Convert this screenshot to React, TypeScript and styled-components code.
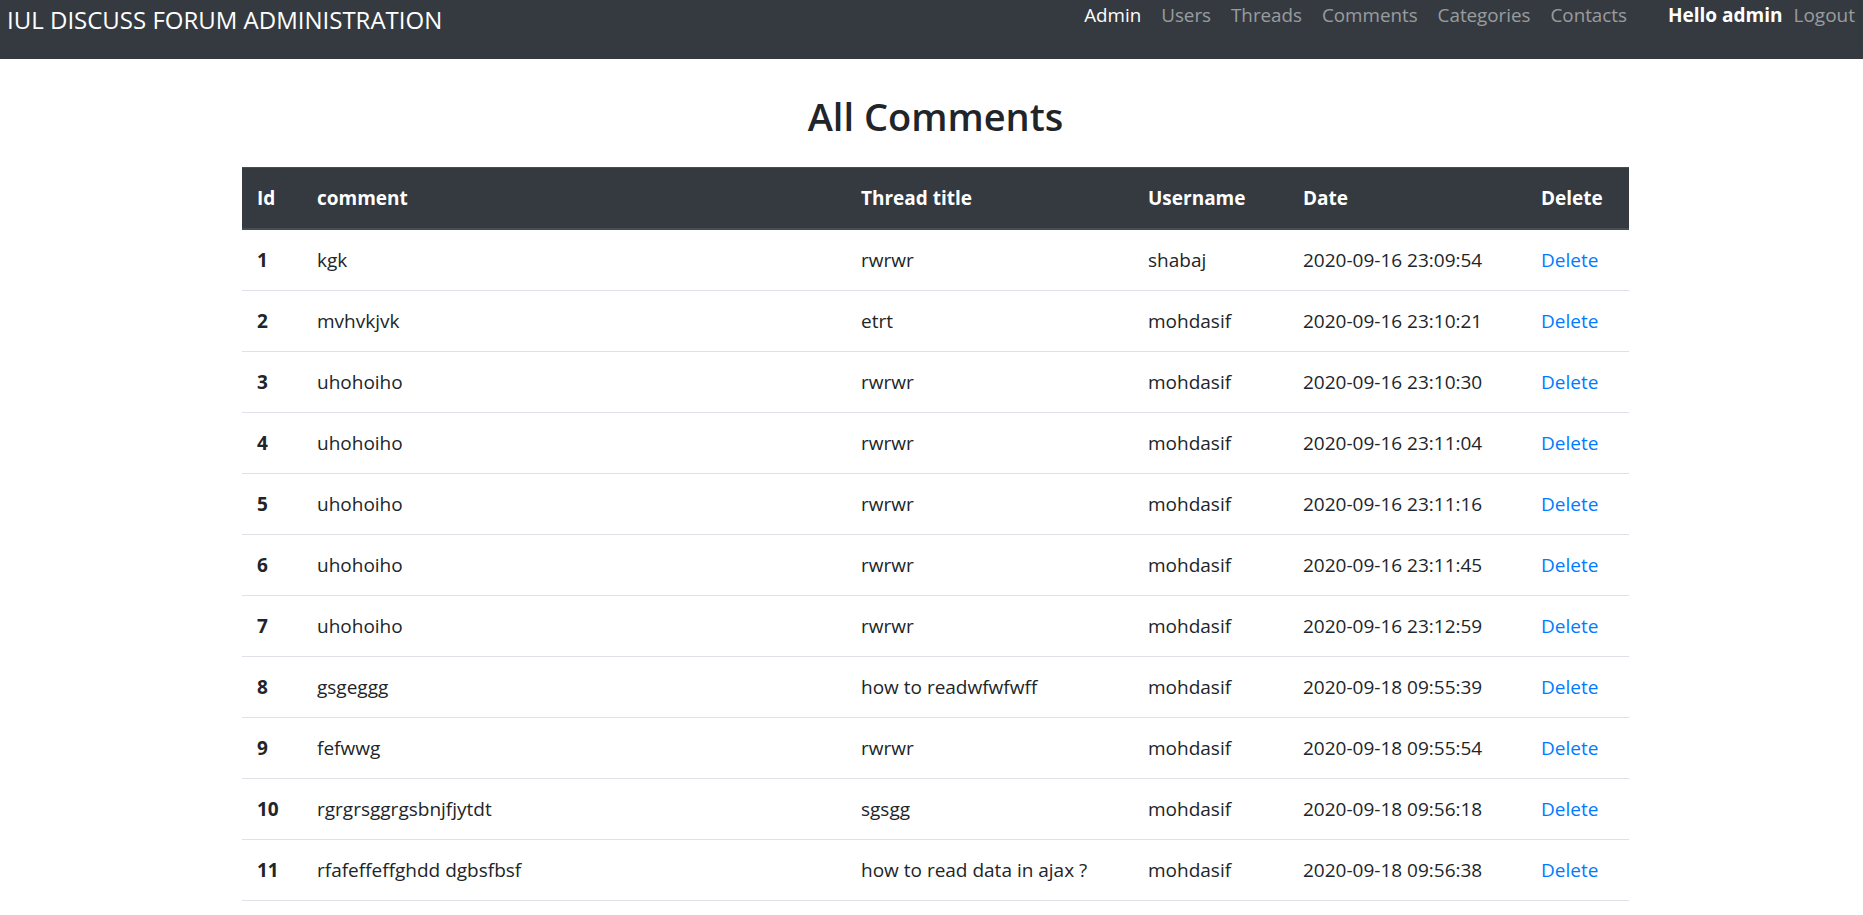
import React from "react";
import styled, { createGlobalStyle } from "styled-components";

const GlobalStyle = createGlobalStyle`
  html, body {
    margin: 0;
    padding: 0;
    background: #fff;
    overflow: hidden;
  }
  body {
    font-family: "Open Sans", "Noto Sans", Arial, sans-serif;
    color: #212529;
    font-size: 19px;
    line-height: 30px;
  }
  * { box-sizing: border-box; }
`;

const NavBar = styled.nav`
  height: 59px;
  background: #343a40;
  display: flex;
  align-items: flex-start;
  padding: 0 8px 0 7px;
`;

const Brand = styled.a`
  font-size: 24px;
  line-height: 36px;
  margin-top: 2px;
  color: #fff;
  text-decoration: none;
  white-space: nowrap;
`;

const NavList = styled.ul`
  list-style: none;
  margin: 0 0 0 auto;
  padding: 0;
  display: flex;
`;

const NavLink = styled.a<{ $active?: boolean }>`
  display: block;
  padding: 0 10px;
  font-size: 18.8px;
  line-height: 30px;
  color: ${(p) => (p.$active ? "#fff" : "rgba(255,255,255,0.5)")};
  text-decoration: none;
`;

const UserArea = styled.div`
  display: flex;
  gap: 11px;
  margin-left: 31px;
  font-size: 19px;
  line-height: 30px;
`;

const Greeting = styled.strong`
  color: #fff;
  font-weight: 700;
`;

const Logout = styled.a`
  color: rgba(255, 255, 255, 0.5);
  text-decoration: none;
`;

const Container = styled.main`
  width: 1387px;
  margin: 0 0 0 calc(50% - 689.5px);
`;

const Title = styled.h2`
  margin: 34px 0 28px;
  text-align: center;
  font-size: 38px;
  line-height: 46px;
  font-weight: 600;
  color: #212529;
`;

const Table = styled.table`
  width: 100%;
  border-collapse: collapse;
  table-layout: fixed;
`;

const HeadCell = styled.th`
  background: #343a40;
  color: #fff;
  text-align: left;
  font-weight: 700;
  padding: 15px;
  border-top: 1px solid #454d55;
  border-bottom: 2px solid #454d55;
  white-space: nowrap;
`;

const Row = styled.tr`
  border-bottom: 1px solid #dee2e6;
`;

const Cell = styled.td<{ $bold?: boolean }>`
  padding: 15px;
  font-weight: ${(p) => (p.$bold ? 700 : 400)};
  white-space: nowrap;
  overflow: hidden;
`;

const DeleteLink = styled.a`
  color: #007bff;
  text-decoration: none;
`;

const navItems = ["Admin", "Users", "Threads", "Comments", "Categories", "Contacts"];

const columns: [string, number][] = [
  ["Id", 60],
  ["comment", 544],
  ["Thread title", 287],
  ["Username", 155],
  ["Date", 238],
  ["Delete", 103],
];

const rows: [number, string, string, string, string][] = [
  [1, "kgk", "rwrwr", "shabaj", "2020-09-16 23:09:54"],
  [2, "mvhvkjvk", "etrt", "mohdasif", "2020-09-16 23:10:21"],
  [3, "uhohoiho", "rwrwr", "mohdasif", "2020-09-16 23:10:30"],
  [4, "uhohoiho", "rwrwr", "mohdasif", "2020-09-16 23:11:04"],
  [5, "uhohoiho", "rwrwr", "mohdasif", "2020-09-16 23:11:16"],
  [6, "uhohoiho", "rwrwr", "mohdasif", "2020-09-16 23:11:45"],
  [7, "uhohoiho", "rwrwr", "mohdasif", "2020-09-16 23:12:59"],
  [8, "gsgeggg", "how to readwfwfwff", "mohdasif", "2020-09-18 09:55:39"],
  [9, "fefwwg", "rwrwr", "mohdasif", "2020-09-18 09:55:54"],
  [10, "rgrgrsggrgsbnjfjytdt", "sgsgg", "mohdasif", "2020-09-18 09:56:18"],
  [11, "rfafeffeffghdd dgbsfbsf", "how to read data in ajax ?", "mohdasif", "2020-09-18 09:56:38"],
];

export default function App() {
  return (
    <>
      <GlobalStyle />
      <NavBar>
        <Brand href="#">IUL DISCUSS FORUM ADMINISTRATION</Brand>
        <NavList>
          {navItems.map((n, i) => (
            <li key={n}>
              <NavLink href="#" $active={i === 0}>
                {n}
              </NavLink>
            </li>
          ))}
        </NavList>
        <UserArea>
          <Greeting>Hello admin</Greeting>
          <Logout href="#">Logout</Logout>
        </UserArea>
      </NavBar>
      <Container>
        <Title>All Comments</Title>
        <Table>
          <colgroup>
            {columns.map(([c, w]) => (
              <col key={c} style={{ width: w }} />
            ))}
          </colgroup>
          <thead>
            <tr>
              {columns.map(([c]) => (
                <HeadCell key={c}>{c}</HeadCell>
              ))}
            </tr>
          </thead>
          <tbody>
            {rows.map(([id, comment, thread, user, date]) => (
              <Row key={id}>
                <Cell $bold>{id}</Cell>
                <Cell>{comment}</Cell>
                <Cell>{thread}</Cell>
                <Cell>{user}</Cell>
                <Cell>{date}</Cell>
                <Cell>
                  <DeleteLink href="#">Delete</DeleteLink>
                </Cell>
              </Row>
            ))}
          </tbody>
        </Table>
      </Container>
    </>
  );
}
